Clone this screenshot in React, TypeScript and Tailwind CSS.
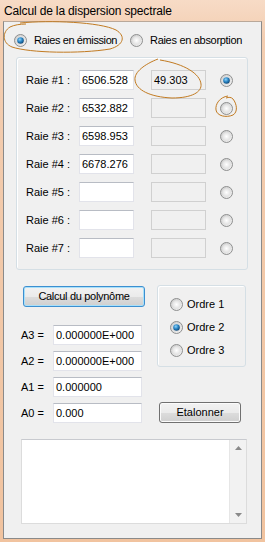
import React from "react";

const font = { fontFamily: '"Liberation Sans", Arial, sans-serif' };

function Radio({ checked }: { checked?: boolean }) {
  return (
    <svg width="13" height="13" viewBox="0 0 13 13" className="shrink-0 block">
      <defs>
        <linearGradient id="rgOuter" x1="0" y1="0" x2="1" y2="1">
          <stop offset="0" stopColor="#c9c9c9" />
          <stop offset="1" stopColor="#f6f6f6" />
        </linearGradient>
        <radialGradient id="rgInner" cx="0.5" cy="0.5" r="0.6">
          <stop offset="0" stopColor="#ffffff" />
          <stop offset="1" stopColor="#dadada" />
        </radialGradient>
        <radialGradient id="rgDot" cx="0.4" cy="0.35" r="0.7">
          <stop offset="0" stopColor="#8fd3fa" />
          <stop offset="0.5" stopColor="#2a86c5" />
          <stop offset="1" stopColor="#0d3f6b" />
        </radialGradient>
      </defs>
      <circle cx="6.5" cy="6.5" r="6" fill="url(#rgOuter)" stroke="#8e8f8f" strokeWidth="1" />
      <circle cx="6.5" cy="6.5" r="4.2" fill="url(#rgInner)" />
      {checked && <circle cx="6.5" cy="6.5" r="3.3" fill="url(#rgDot)" />}
    </svg>
  );
}

function TB({ value, disabled, w }: { value?: string; disabled?: boolean; w: string }) {
  return (
    <div
      className={
        disabled
          ? `${w} h-[20px] shrink-0 border border-[#d0d0d0] bg-[#f0f0f0] flex items-center pl-[2px] text-[11px] text-black leading-none`
          : `${w} h-[20px] shrink-0 border border-[#e2e3ea] border-t-[#b8bcc4] bg-white flex items-center pl-[2px] text-[11px] text-black leading-none`
      }
    >
      {value}
    </div>
  );
}

const rows = [
  { n: 1, v: "6506.528", r: "49.303", c: true },
  { n: 2, v: "6532.882", r: "" },
  { n: 3, v: "6598.953", r: "" },
  { n: 4, v: "6678.276", r: "" },
  { n: 5, v: "", r: "" },
  { n: 6, v: "", r: "" },
  { n: 7, v: "", r: "" },
];

const coefs = [
  { l: "A3 =", v: "0.000000E+000" },
  { l: "A2 =", v: "0.000000E+000" },
  { l: "A1 =", v: "0.000000" },
  { l: "A0 =", v: "0.000" },
];

const btnBg =
  "bg-[linear-gradient(#f2f2f2_0%,#ebebeb_50%,#dddddd_50%,#cfcfcf_100%)]";

export default function App() {
  return (
    <div
      className="relative w-[265px] h-[542px] flex flex-col pl-[3px] pr-[3px] pb-[3px] bg-[linear-gradient(#f7dbc6,#f3cdb0_40px,#f1c39f)] overflow-hidden"
      style={font}
    >
      <div className="h-[21px] shrink-0 flex items-center pl-[1px] text-[12px] tracking-[-0.15px] text-black leading-none">
        Calcul de la dispersion spectrale
      </div>
      <div className="flex-1 border border-[#8a8a8a] border-t-[#b9a89a] bg-[#f0f0f0] flex flex-col text-[11px] text-black">
        {/* top radios */}
        <div className="mt-[11px] h-[14px] flex items-center pl-[10px]">
          <div className="w-[116px] flex items-center">
            <Radio checked />
            <span className="ml-[7px] leading-none tracking-[-0.4px]">Raies en émission</span>
          </div>
          <div className="flex items-center">
            <Radio />
            <span className="ml-[7px] leading-none tracking-[-0.3px]">Raies en absorption</span>
          </div>
        </div>

        {/* group box */}
        <div className="mt-[10px] ml-[12px] w-[232px] h-[213px] border border-[#d5dfe5] rounded-[3px] pt-[12px] pl-[9px] flex flex-col gap-[8px] shadow-[inset_1px_1px_0_#ffffff]">
          {rows.map((r) => (
            <div key={r.n} className="h-[20px] flex items-center">
              <span className="w-[53px] shrink-0 leading-none">Raie #{r.n} :</span>
              <TB w="w-[55px]" value={r.v} />
              <div className="ml-[17px]">
                <TB w="w-[55px]" value={r.r} disabled />
              </div>
              <div className="ml-[14px]">
                <Radio checked={r.c} />
              </div>
            </div>
          ))}
        </div>

        {/* bottom */}
        <div className="mt-[15px] pl-[17px] flex items-start">
          <div className="w-[124px] shrink-0 flex flex-col">
            <div
              className={`mt-[1px] ml-[2px] w-[122px] h-[21px] rounded-[3px] border border-[#3c8fd0] ${btnBg} shadow-[inset_0_0_0_1px_#a8e0fa] flex items-center justify-center leading-none tracking-[-0.3px]`}
            >
              Calcul du polynôme
            </div>
            <div className="mt-[18px] flex flex-col gap-[6px]">
              {coefs.map((c) => (
                <div key={c.l} className="h-[20px] flex items-center">
                  <span className="w-[32px] shrink-0 leading-none">{c.l}</span>
                  <TB w="w-[89px]" value={c.v} />
                </div>
              ))}
            </div>
          </div>
          <div className="ml-[12px] flex flex-col">
            <div className="w-[89px] h-[82px] border border-[#d5dfe5] rounded-[3px] pt-[12px] pl-[12px] flex flex-col gap-[10px] shadow-[inset_1px_1px_0_#ffffff]">
              {["Ordre 1", "Ordre 2", "Ordre 3"].map((o, i) => (
                <div key={o} className="h-[13px] flex items-center">
                  <Radio checked={i === 1} />
                  <span className="ml-[4px] leading-none">{o}</span>
                </div>
              ))}
            </div>
            <div
              className={`mt-[35px] ml-[2px] w-[82px] h-[21px] rounded-[3px] border border-[#707070] ${btnBg} shadow-[inset_0_0_0_1px_#fbfbfb] flex items-center justify-center leading-none`}
            >
              Etalonner
            </div>
          </div>
        </div>

        {/* text area */}
        <div className="mt-[16px] ml-[17px] w-[226px] h-[85px] border border-[#dcdcdc] border-t-[#c8cacf] bg-white flex">
          <div className="flex-1" />
          <div className="w-[17px] bg-[#f2f2f2] border-l border-[#e6e6e6] flex flex-col items-center justify-between py-[6px]">
            <svg width="7" height="4" viewBox="0 0 7 4" className="block">
              <path d="M0 4 L3.5 0 L7 4 Z" fill="#8a8a8a" />
            </svg>
            <svg width="7" height="4" viewBox="0 0 7 4" className="block">
              <path d="M0 0 L3.5 4 L7 0 Z" fill="#8a8a8a" />
            </svg>
          </div>
        </div>
      </div>

      {/* hand-drawn annotations */}
      <svg
        className="absolute top-0 left-0 pointer-events-none"
        width="265"
        height="542"
        viewBox="0 0 265 542"
      >
        <g fill="none" stroke="#c27b22" strokeWidth="1">
          <path d="M 20 23 C 50 20, 100 22, 116 30 C 126 36, 124 45, 110 49 C 80 54, 30 53, 12 47 C 2 43, 2 32, 10 27 C 14 25, 20 24, 26 24" />
          <path d="M 158 59 C 145 64, 134 72, 135 80 C 136 90, 150 97, 172 98 C 192 98, 202 92, 201 84 C 200 74, 185 64, 160 60" />
          <path d="M 228 96 C 220 97, 215 104, 216 110 C 217 116, 226 118, 233 115 C 238 112, 237 104, 233 99 C 231 97, 229 97, 226 98" />
        </g>
      </svg>
    </div>
  );
}
